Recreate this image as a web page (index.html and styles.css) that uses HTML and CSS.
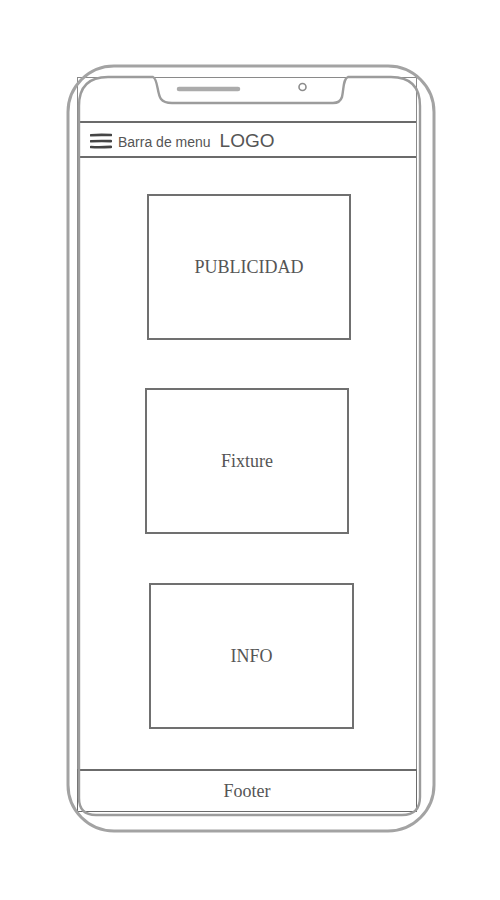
FILE: index.html
```html
<!DOCTYPE html>
<html lang="es">
<head>
  <meta charset="UTF-8" />
  <meta name="viewport" content="width=device-width, initial-scale=1.0"/>
  <title>Wireframe Movil</title>
  <link rel="stylesheet" href="styles.css">
</head>
<body>
  <div class="screen">
    <header class="menu-bar">
      <svg class="burger" width="22" height="18" viewBox="0 0 22 18">
        <path d="M1 3.2 Q8 2.6 21 3" />
        <path d="M1 9.2 Q10 8.8 21 9.1" />
        <path d="M1 15 Q9 15.4 21 14.9" />
      </svg>
      <span class="menu-label">Barra de menu</span>
      <span class="logo">LOGO</span>
    </header>

    <main class="content">
      <div class="box box-ad">PUBLICIDAD</div>
      <div class="box box-fixture">Fixture</div>
      <div class="box box-info">INFO</div>
    </main>

    <footer class="footer">Footer</footer>
  </div>

  <!-- phone body drawn over the screen -->
  <svg class="phone-frame" width="500" height="900" viewBox="0 0 500 900">
    <rect class="shell-outer" x="68" y="66" width="366" height="765" rx="46" />
    <path class="shell-inner" d="M79 106 Q79 77 108 77 L153 77 C158 79 157 94 161 99 Q164 103 172 103 L333 103 Q340 103 342 97 C344 88 343 79 348 77 L391 77 Q420 77 420 106 L420 797 Q420 815 402 815 L96 815 Q79 815 79 798 Z" />
    <line class="speaker" x1="179" y1="89" x2="238" y2="89" />
    <circle class="camera" cx="302.5" cy="87" r="3.5" />
  </svg>
</body>
</html>
```

FILE: styles.css
```css
:root {
  --line: #6b6b6b;
  --line-light: #8a8a8a;
  --shell: #a3a3a3;
  --text: #555;
}

body {
  margin: 0;
  background: #fff;
  position: relative;
  width: 500px;
  height: 900px;
}

.screen {
  margin: 77px 0 0 77px;
  width: 340px;
  height: 735px;
  box-sizing: border-box;
  border: 1px solid var(--line-light);
  border-bottom: none;
  display: flex;
  flex-direction: column;
}

.menu-bar {
  margin-top: 43px;
  height: 37px;
  box-sizing: border-box;
  border-top: 2px solid var(--line);
  border-bottom: 2px solid var(--line);
  display: flex;
  align-items: center;
  padding: 5px 0 0 12px;
  font-family: "Liberation Sans", Arial, sans-serif;
  color: var(--text);
}

.burger {
  margin-right: 6px;
  margin-top: -3px;
}

.burger path {
  fill: none;
  stroke: #454545;
  stroke-width: 2.6;
  stroke-linecap: round;
}

.menu-label {
  font-size: 14px;
}

.logo {
  font-size: 19px;
  margin-left: 9px;
  margin-top: -2px;
}

.content {
  display: flex;
  flex-direction: column;
  gap: 48px;
  padding-top: 36px;
}

.box {
  width: 204px;
  height: 146px;
  box-sizing: border-box;
  border: 2px solid #707070;
  display: flex;
  align-items: center;
  justify-content: center;
  font-family: "Liberation Serif", "Times New Roman", serif;
  font-size: 18px;
  color: var(--text);
}

.box-ad {
  margin-left: 69px;
}

.box-fixture {
  margin-left: 67px;
}

.box-info {
  margin-left: 71px;
  margin-top: 1px;
  width: 205px;
}

.footer {
  margin: auto -1px 0;
  height: 43px;
  box-sizing: border-box;
  border: 1.5px solid var(--line);
  border-top-width: 2px;
  text-align: center;
  line-height: 40px;
  font-family: "Liberation Serif", "Times New Roman", serif;
  font-size: 18px;
  color: var(--text);
}

.phone-frame {
  position: absolute;
  left: 0;
  top: 0;
  pointer-events: none;
}

.shell-outer {
  fill: none;
  stroke: var(--shell);
  stroke-width: 3;
}

.shell-inner {
  fill: none;
  stroke: #9c9c9c;
  stroke-width: 2.4;
}

.speaker {
  stroke: #ababab;
  stroke-width: 4.5;
  stroke-linecap: round;
}

.camera {
  fill: none;
  stroke: #8c8c8c;
  stroke-width: 1.6;
}
```
